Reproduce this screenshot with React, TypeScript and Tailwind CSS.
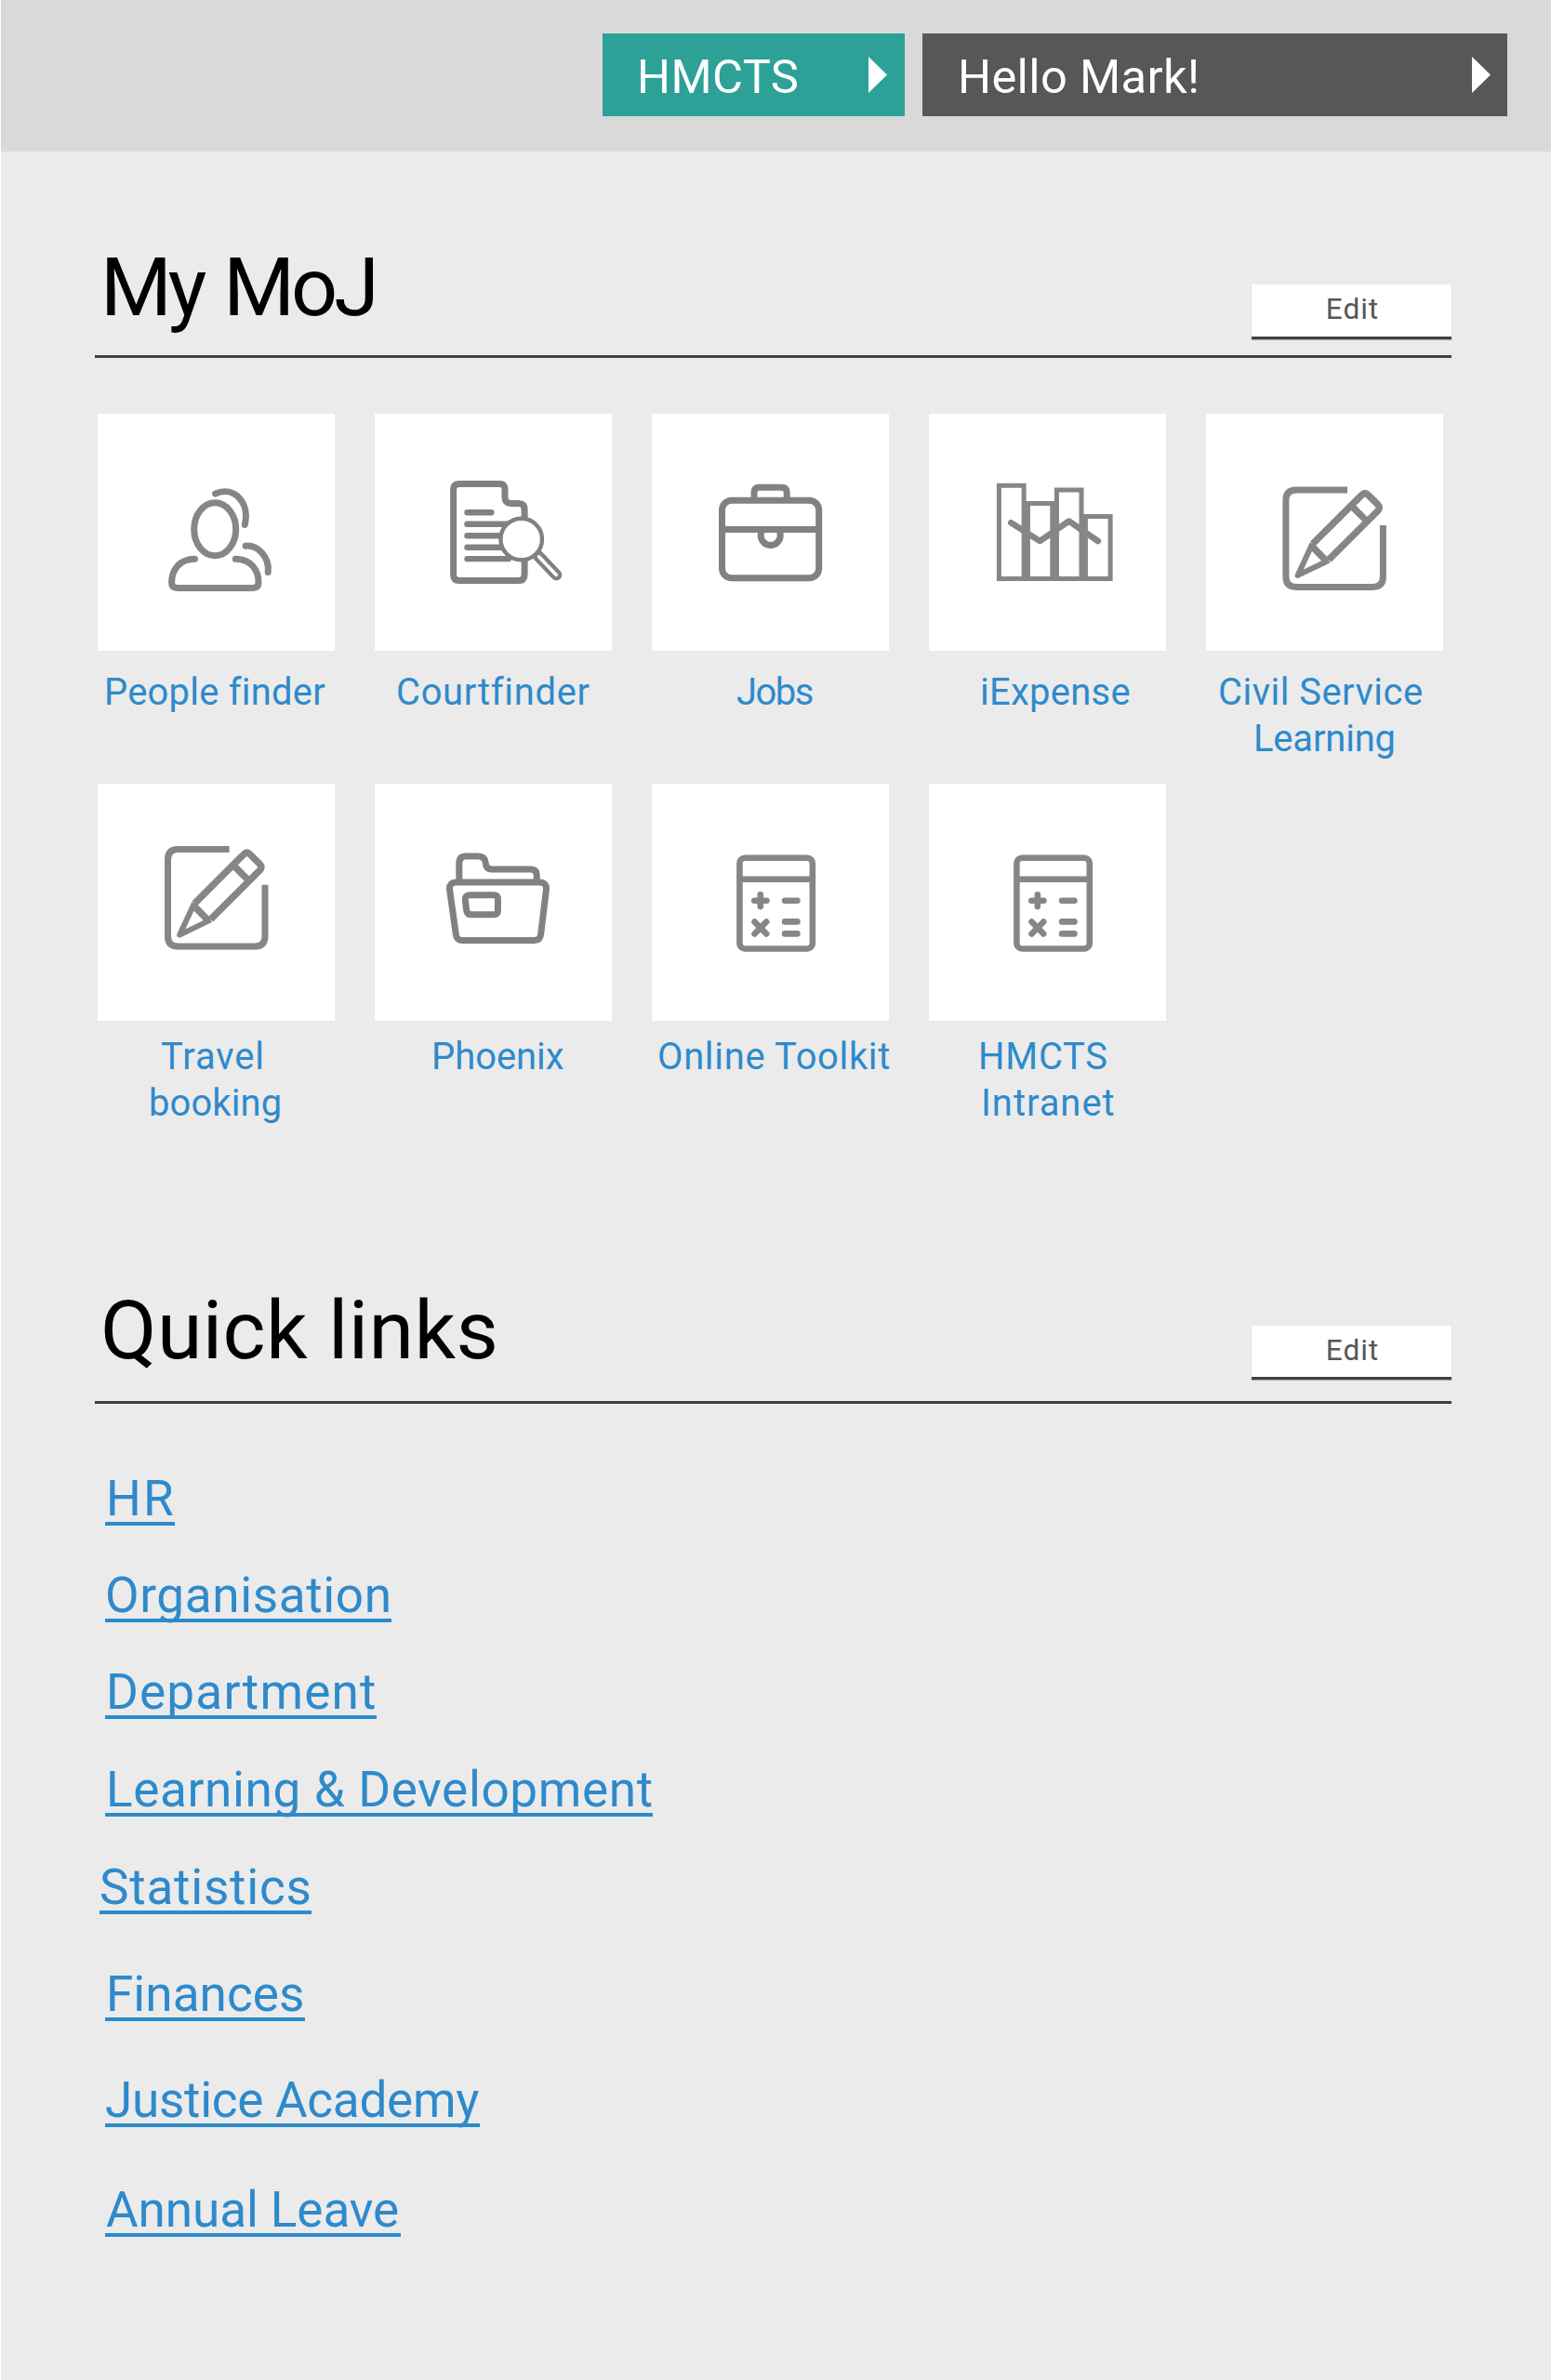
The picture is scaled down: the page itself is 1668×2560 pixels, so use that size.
import React from "react";

type IconProps = { className?: string };

const iconBase = {
  viewBox: "0 0 255 255",
  width: 255,
  height: 255,
  fill: "none",
  strokeWidth: 7,
} as const;

function PeopleIcon() {
  return (
    <svg {...iconBase} stroke="#868686" strokeLinecap="round">
      <ellipse cx="126.2" cy="124.3" rx="22.5" ry="28.5" />
      <path d="M104.5 156.2C88 156.2 79.6 168 79.6 181.5Q79.6 187.4 86 187.4H166.5Q173 187.4 173 181.5C173 168 164.5 156.2 148.3 156.2" />
      <path d="M126.6 86C147 77 164 96 158.3 119.5" />
      <path d="M159.2 142.2C172 141 185 154 183.3 170.5" />
    </svg>
  );
}

function DocumentSearchIcon() {
  return (
    <svg {...iconBase} stroke="#808184">
      <path d="M161.1 118V103Q161.1 96.4 154.6 96.4H146.5Q140 96.4 140 90V82Q140 75.6 134.5 75.6H91Q84.6 75.6 84.6 82V173Q84.6 179.5 91 179.5H154.6Q161.1 179.5 161.1 173V150" />
      <path
        strokeLinecap="round"
        strokeWidth="6.4"
        d="M99.5 106.3H125.3M99.5 118.7H145M99.5 131.3H140M99.5 143.8H140M99.5 156.1H144"
      />
      <path strokeLinecap="round" strokeWidth="12" d="M174 151L195.3 173.4" />
      <path stroke="#fff" strokeLinecap="round" strokeWidth="3.6" d="M176.5 153.8L195.3 173.4" />
      <circle cx="157.7" cy="135" r="22.3" fill="#fff" strokeWidth="4.4" />
    </svg>
  );
}

function BriefcaseIcon() {
  return (
    <svg {...iconBase} stroke="#808184">
      <rect x="75.5" y="93.2" width="104.2" height="83.6" rx="10.5" />
      <path d="M75.5 124.4H179.7" />
      <path d="M110 92V85Q110 79.2 115.5 79.2H139.5Q145.2 79.2 145.2 85V92" />
      <path d="M119.5 124.4A10.5 10.5 0 1 0 135.9 124.4" />
    </svg>
  );
}

function BarsIcon() {
  return (
    <svg {...iconBase} stroke="#868686" strokeWidth="5">
      <path d="M75.4 77.3H102.1V177.5H75.4ZM106.4 96.6H132.8V177.5H106.4ZM137.4 81.9H164V177.5H137.4ZM168.4 110.6H195.1V177.5H168.4Z" />
      <path
        strokeWidth="6.6"
        strokeLinecap="round"
        strokeLinejoin="round"
        d="M88.3 117.2L119.3 137L150.6 115.5L181.8 137"
      />
    </svg>
  );
}

function PencilIcon({ className }: IconProps) {
  return (
    <svg {...iconBase} stroke="#868686" className={className}>
      <path d="M152 81.9H97Q85.9 81.9 85.9 93V175.3Q85.9 186.4 97 186.4H179.2Q190.4 186.4 190.4 175.3V120" />
      <path
        strokeWidth="7.4"
        strokeLinejoin="round"
        d="M114.6 140.1L167.5 87.3Q170.9 83.9 174.3 87.3L184.7 97.7Q188.1 101.1 184.7 104.5L131.9 157.2M156 98.7L173.3 116M113.5 142.2L129.7 158.7"
      />
      <path strokeWidth="6" strokeLinejoin="round" d="M114.4 139.8L98.6 173.9L132 157.7" />
    </svg>
  );
}

function FolderIcon() {
  return (
    <svg {...iconBase} stroke="#808184">
      <path d="M88 106H177Q185 106 184.5 113.5L178.6 162Q178 168.5 171.5 168.5H94Q88 168.5 87.3 162L80.5 113.5Q80 106 88 106Z" />
      <path d="M90.8 106V86Q90.8 78.1 98 78.1H111Q118.5 78.1 119.2 85Q119.7 92.1 126 92.1H167Q174.2 92.1 174.2 99V106" />
      <path d="M102 119.7H128Q132.4 119.7 132.4 124V136.5Q132.4 140.8 128 140.8H104Q99.5 140.8 98.7 136.5L97.3 125Q97 119.7 102 119.7Z" />
    </svg>
  );
}

function CalculatorIcon() {
  return (
    <svg {...iconBase} stroke="#868686" strokeWidth="6.6">
      <rect x="94.4" y="79.7" width="78.4" height="97.8" rx="6" />
      <path d="M94.4 102.7H172.8" />
      <path
        strokeLinecap="round"
        d="M110.3 125.7H123.4M116.8 119.3V132.1M143.1 125.7H156.4M110.5 148.5L123.2 161.5M123.2 148.5L110.5 161.5M143.1 148.4H156.4M143.1 161.4H156.4"
      />
    </svg>
  );
}

type Line = { text: string; className: string };
type Tile = { icon: React.ReactNode; lines: Line[] };

const rowOne: Tile[] = [
  { icon: <PeopleIcon />, lines: [{ text: "People finder", className: "pl-[7px] tracking-[0.25px]" }] },
  { icon: <DocumentSearchIcon />, lines: [{ text: "Courtfinder", className: "pl-[23px] tracking-[0.7px]" }] },
  { icon: <BriefcaseIcon />, lines: [{ text: "Jobs", className: "pl-[91px] tracking-[-1.5px]" }] },
  { icon: <BarsIcon />, lines: [{ text: "iExpense", className: "pl-[55px] tracking-[0.3px]" }] },
  {
    icon: <PencilIcon />,
    lines: [
      { text: "Civil Service", className: "pl-[13px] tracking-[0.5px]" },
      { text: "Learning", className: "pl-[51px] tracking-[-0.15px]" },
    ],
  },
];

const rowTwo: Tile[] = [
  {
    icon: <PencilIcon className="-translate-x-[10.4px] -translate-y-[11.3px]" />,
    lines: [
      { text: "Travel", className: "pl-[68px] tracking-[0.9px]" },
      { text: "booking", className: "pl-[55px] tracking-[0.15px]" },
    ],
  },
  { icon: <FolderIcon />, lines: [{ text: "Phoenix", className: "pl-[61px] tracking-[0px]" }] },
  { icon: <CalculatorIcon />, lines: [{ text: "Online Toolkit", className: "pl-[6px] tracking-[0.7px]" }] },
  {
    icon: <CalculatorIcon />,
    lines: [
      { text: "HMCTS", className: "pl-[53px] tracking-[0.8px]" },
      { text: "Intranet", className: "pl-[56px] tracking-[1px]" },
    ],
  },
];

const links: Line[] = [
  { text: "HR", className: "w-[75px] pl-px tracking-[2px]" },
  { text: "Organisation", className: "mt-11 w-[308px] tracking-[0.6px]" },
  { text: "Department", className: "mt-11 w-[292px] pl-px tracking-[1.15px]" },
  { text: "Learning & Development", className: "mt-[45px] w-[589px] pl-px tracking-[0.6px]" },
  { text: "Statistics", className: "-ml-[6px] mt-[45px] w-[228px] tracking-[0.75px]" },
  { text: "Finances", className: "mt-[55px] w-[215px] pl-px tracking-[0px]" },
  { text: "Justice Academy", className: "mt-[54px] w-[403px] tracking-[-0.32px]" },
  { text: "Annual Leave", className: "mt-[58px] w-[318px] pl-px tracking-[-0.12px]" },
];

function TileRow({ tiles, labelClass, className }: { tiles: Tile[]; labelClass: string; className: string }) {
  return (
    <ul className={`ml-[3px] grid grid-cols-[repeat(5,255px)] gap-x-[43px] ${className}`}>
      {tiles.map((tile, i) => (
        <li key={i}>
          <div className="size-[255px] overflow-hidden bg-white">{tile.icon}</div>
          <a className={`block text-[39.9px] leading-[50px] whitespace-nowrap text-[#2e8acb] ${labelClass}`}>
            {tile.lines.map((line) => (
              <span key={line.text} className={`block ${line.className}`}>
                {line.text}
              </span>
            ))}
          </a>
        </li>
      ))}
    </ul>
  );
}

function SectionHeader({ title, titleClass, editClass }: { title: string; titleClass: string; editClass: string }) {
  return (
    <header className="flex w-[1459px] items-start justify-between border-b-[3px] border-[#404040] pl-[6px]">
      <h2 className={`whitespace-nowrap text-black ${titleClass}`}>{title}</h2>
      <a
        className={`block w-[215px] border-b-[3px] border-[#404040] bg-white pl-0.5 text-center text-[31.6px] leading-[54px] tracking-[0.95px] text-[#575756] shadow-[0_1px_1px_rgba(0,0,0,0.25)] ${editClass}`}
      >
        Edit
      </a>
    </header>
  );
}

function Arrow() {
  return (
    <svg width="20" height="39" viewBox="0 0 20 39" className="mt-[25px]">
      <path d="M0 0L20 19.5L0 39Z" fill="#fff" />
    </svg>
  );
}

export default function App() {
  return (
    <div className="h-[2560px] w-[1668px] overflow-hidden border-l border-white bg-[#ebebeb] font-['Roboto',sans-serif]">
      <nav className="flex h-[163px] gap-[19px] bg-[#d9d9d9] pt-9 pl-[647px] text-[50.6px] leading-[94px] whitespace-nowrap text-white">
        <a className="flex h-[89px] w-[325px] items-start justify-between bg-[#2da197] pr-[19px] pl-[37px]">
          <span className="tracking-[0.4px]">HMCTS</span>
          <Arrow />
        </a>
        <a className="flex h-[89px] w-[629px] items-start justify-between bg-[#575755] pr-[18px] pl-[38px]">
          <span className="tracking-[0.35px]">Hello Mark!</span>
          <Arrow />
        </a>
      </nav>
      <main className="pt-[94px] pl-[101px]">
        <section className="h-[1122px]">
          <SectionHeader
            title="My MoJ"
            titleClass="h-[125px] text-[88px] leading-[103px] tracking-[-4px] [word-spacing:4px]"
            editClass="mt-[49px] h-[59px]"
          />
          <TileRow tiles={rowOne} className="mt-[60px] h-[398px]" labelClass="mt-5" />
          <TileRow tiles={rowTwo} className="" labelClass="mt-3.5" />
        </section>
        <section>
          <SectionHeader
            title="Quick links"
            titleClass="h-[128px] text-[88px] leading-[104px] tracking-[0.35px]"
            editClass="mt-[47px] h-[58px]"
          />
          <ul className="mt-[71px] ml-[11px] text-[53.15px] leading-[62px] whitespace-nowrap text-[#2e8acb]">
            {links.map((link) => (
              <li key={link.text} className={`h-[60px] border-b-4 border-[#2e8acb] ${link.className}`}>
                <a>{link.text}</a>
              </li>
            ))}
          </ul>
        </section>
      </main>
    </div>
  );
}
